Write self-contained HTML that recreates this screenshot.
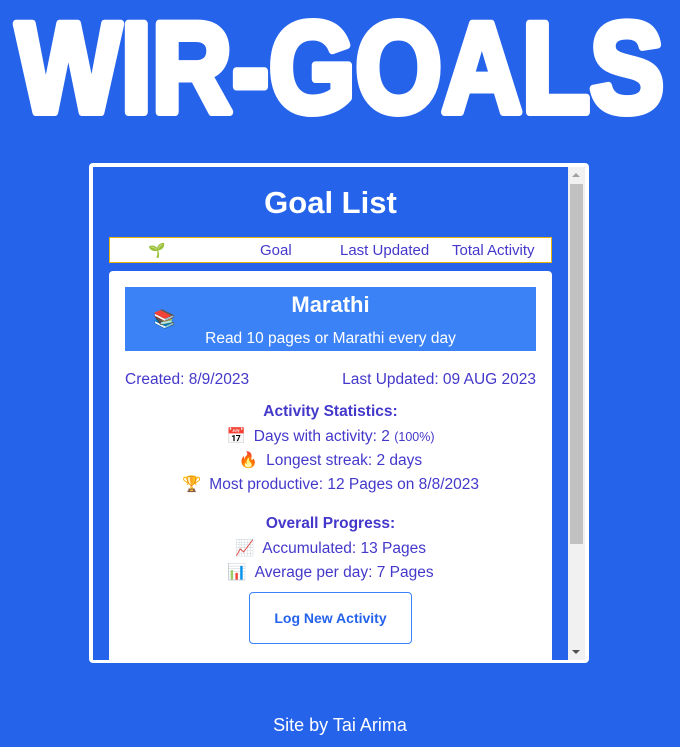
<!DOCTYPE html>
<html><head><meta charset="utf-8"><style>
*{margin:0;padding:0;box-sizing:border-box}
body{width:680px;height:747px;background:#2563eb;font-family:"Liberation Sans",sans-serif;position:relative;overflow:hidden}
.frame{position:absolute;left:89px;top:163px;width:500px;height:500px;background:#fff;border-radius:4px}
.inner{position:absolute;left:4px;top:4px;width:475px;height:493px;background:#2563eb;overflow:hidden}
.sb{position:absolute;left:479px;top:4px;width:17px;height:493px;background:#f1f1f1}
.thumb{position:absolute;left:2px;top:17px;width:13px;height:360px;background:#c1c1c1}
h1{position:absolute;top:18px;width:100%;text-align:center;color:#fff;font-size:31px;font-weight:bold}
.hdr{position:absolute;left:16px;top:70px;width:443px;height:26px;background:#fff;border:1px solid #eab308;font-size:15px;color:#4338ca}
.hdr span{position:absolute;top:4px}
.card{position:absolute;left:16px;top:104px;width:443px;height:400px;background:#fff;border-radius:4px;color:#4338ca;font-size:15.5px}
.mb{position:absolute;left:16px;top:16px;width:411px;height:64px;background:#3b82f6;color:#fff;text-align:center}
.c{position:absolute;width:100%;text-align:center}
.e{margin-right:8px}
.btn{position:absolute;left:140px;top:321px;width:163px;height:52px;border:1px solid #3b82f6;border-radius:4px;text-align:center;line-height:50px;font-weight:bold;font-size:14px;color:#2563eb}
</style></head><body>
<svg style="position:absolute;left:0;top:0" width="680" height="130"><text x="16" y="112" textLength="648" lengthAdjust="spacingAndGlyphs" font-family="Liberation Sans" font-weight="bold" font-size="128" fill="#fff" stroke="#fff" stroke-width="8" stroke-linejoin="round">WIR-GOALS</text></svg>
<div class="frame">
<div class="inner">
<h1>Goal List</h1>
<div class="hdr"><span style="left:38px;font-size:14px">🌱</span><span style="left:150px">Goal</span><span style="left:230px">Last Updated</span><span style="left:342px">Total Activity</span></div>
<div class="card">
<div class="mb"><div class="c" style="top:5px;font-size:22px;font-weight:bold">Marathi</div><div style="position:absolute;left:28px;top:22px;font-size:18px">📚</div><div class="c" style="top:43px;font-size:15.5px">Read 10 pages or Marathi every day</div></div>
<div style="position:absolute;left:16px;top:100px">Created: 8/9/2023</div>
<div style="position:absolute;right:16px;top:100px">Last Updated: 09 AUG 2023</div>
<div class="c" style="top:132px;font-weight:bold">Activity Statistics:</div>
<div class="c" style="top:156px"><span class="e">📅</span>Days with activity: 2 <small style="font-size:12.5px">(100%)</small></div>
<div class="c" style="top:180px"><span class="e">🔥</span>Longest streak: 2 days</div>
<div class="c" style="top:204px"><span class="e">🏆</span>Most productive: 12 Pages on 8/8/2023</div>
<div class="c" style="top:244px;font-weight:bold">Overall Progress:</div>
<div class="c" style="top:268px"><span class="e">📈</span>Accumulated: 13 Pages</div>
<div class="c" style="top:292px"><span class="e">📊</span>Average per day: 7 Pages</div>
<div class="btn">Log New Activity</div>
</div>
</div>
<div class="sb"><div class="thumb"></div><div style="position:absolute;left:4px;top:6px;border:4px solid transparent;border-bottom:4px solid #a0a0a0;border-top:0"></div><div style="position:absolute;left:4px;bottom:6px;border:4px solid transparent;border-top:4px solid #505050;border-bottom:0"></div></div>
</div>
<div style="position:absolute;top:715px;width:100%;text-align:center;color:#fff;font-size:18px">Site by Tai Arima</div>
</body></html>
